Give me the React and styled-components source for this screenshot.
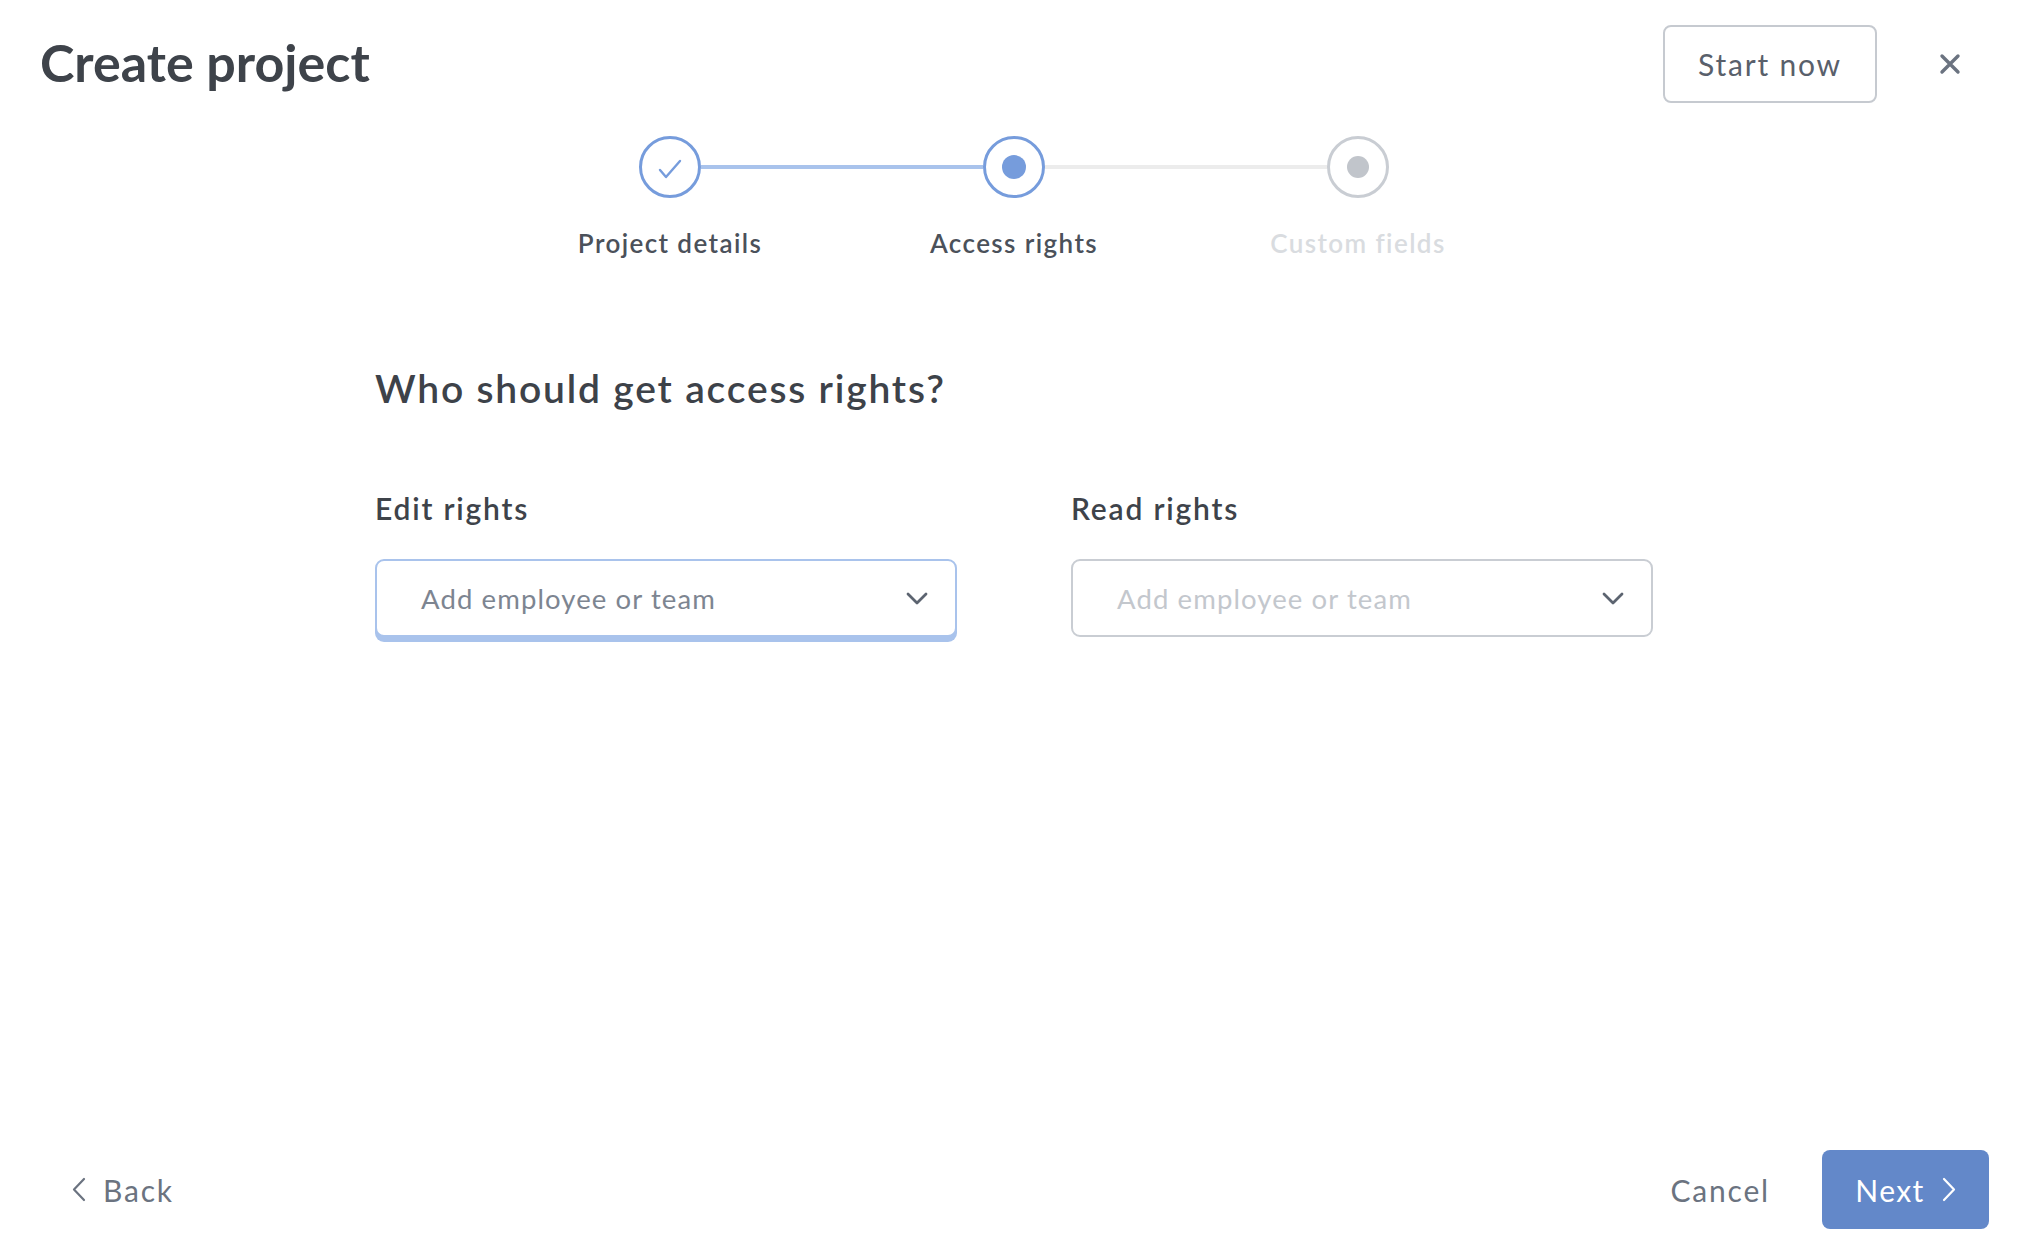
import React from 'react';
import styled, {createGlobalStyle} from 'styled-components';

const GlobalStyle = createGlobalStyle`
  html, body {
    margin: 0;
    padding: 0;
    background: #ffffff;
  }
  body {
    font-family: Lato, "Open Sans", sans-serif;
    -webkit-font-smoothing: antialiased;
  }
  * { box-sizing: border-box; }
`

const BLUE = '#769cdc'
const BLUE_LIGHT = '#a9c3ec'
const GREY_RING = '#c9cdd3'

const Page = styled.div`
  height: 100vh;
  display: flex;
  flex-direction: column;
  padding-top: 25px;
`

const Header = styled.header`
  display: flex;
  align-items: center;
  justify-content: space-between;
  padding: 0 60px 0 40px;
  height: 78px;
`

const Title = styled.h1`
  margin: -5px 0 0;
  font-size: 52px;
  font-weight: 700;
  color: #3e434a;
`

const HeaderActions = styled.div`
  display: flex;
  align-items: center;
  gap: 49px;
`

const OutlineButton = styled.button`
  height: 78px;
  width: 214px;
  border: 2px solid #c6cad0;
  border-radius: 8px;
  background: #fff;
  font-family: inherit;
  font-size: 30px;
  letter-spacing: 1.8px;
  color: #59606b;
  cursor: pointer;
`

const IconButton = styled.button`
  width: 48px;
  height: 48px;
  border: none;
  background: none;
  padding: 0;
  display: flex;
  align-items: center;
  justify-content: center;
  color: #6b7380;
  cursor: pointer;
`

const Main = styled.main`
  padding-right: 6px;
`

const Stepper = styled.div`
  display: flex;
  justify-content: center;
  align-items: flex-start;
  margin-top: 33px;
`

const Step = styled.div`
  width: 62px;
  display: flex;
  flex-direction: column;
  align-items: center;
`

const Circle = styled.div`
  width: 62px;
  height: 62px;
  border-radius: 50%;
  border: 3px solid ${p => p.$muted ? GREY_RING : BLUE};
  display: flex;
  align-items: center;
  justify-content: center;
  color: ${BLUE};
`

const Dot = styled.span`
  width: ${p => p.$muted ? 22 : 24}px;
  height: ${p => p.$muted ? 22 : 24}px;
  border-radius: 50%;
  background: ${p => p.$muted ? '#c1c5cb' : BLUE};
`

const StepLabel = styled.div`
  margin-top: 29px;
  white-space: nowrap;
  font-size: 26px;
  line-height: 32px;
  font-weight: 600;
  letter-spacing: 1.4px;
  color: ${p => p.$muted ? '#d9dce0' : '#4b515a'};
`

const Connector = styled.div`
  flex: 0 0 282px;
  height: 4px;
  margin-top: 29px;
  background: ${p => p.$done ? BLUE_LIGHT : '#ececec'};
`

const Content = styled.section`
  width: 1278px;
  margin: 105px auto 0;
`

const Heading = styled.h2`
  margin: 0;
  font-size: 39px;
  line-height: 48px;
  font-weight: 600;
  letter-spacing: 1.8px;
  color: #3d4249;
`

const Fields = styled.div`
  display: grid;
  grid-template-columns: 582px 582px;
  column-gap: 114px;
  margin-top: 78px;
`

const Field = styled.div`
  display: flex;
  flex-direction: column;
`

const FieldLabel = styled.label`
  font-size: 30px;
  line-height: 36px;
  font-weight: 600;
  letter-spacing: 1.8px;
  color: #3e434a;
`

const Select = styled.div`
  margin-top: 33px;
  height: 78px;
  border-radius: 9px;
  border: 2px solid ${p => p.$focused ? BLUE_LIGHT : GREY_RING};
  box-shadow: ${p => p.$focused ? `0 5px 0 0 ${BLUE_LIGHT}` : 'none'};
  display: flex;
  align-items: center;
  justify-content: space-between;
  padding: 0 27px 0 44px;
  background: #fff;
  cursor: pointer;
`

const Placeholder = styled.span`
  font-size: 27.5px;
  letter-spacing: 1.1px;
  color: ${p => p.$focused ? '#7d8591' : '#c3c7cd'};
`

const Footer = styled.footer`
  margin-top: auto;
  display: flex;
  align-items: center;
  justify-content: space-between;
  padding: 0 45px 29px 40px;
`

const TextButton = styled.button`
  border: none;
  background: none;
  font-family: inherit;
  font-size: 30px;
  letter-spacing: 1.8px;
  color: #6b7380;
  display: flex;
  align-items: center;
  gap: 17px;
  padding: 0 0 0 32px;
  cursor: pointer;
`

const CancelButton = styled(TextButton)`
  padding: 0;
`

const FooterActions = styled.div`
  display: flex;
  align-items: center;
  gap: 52px;
`

const PrimaryButton = styled.button`
  height: 79px;
  width: 167px;
  border: none;
  border-radius: 8px;
  background: #6388c9;
  color: #fff;
  font-family: inherit;
  font-size: 30px;
  letter-spacing: 1.4px;
  display: flex;
  align-items: center;
  justify-content: center;
  gap: 17px;
  cursor: pointer;
`

const Chevron = ({dir = 'down', color = 'currentColor'}) => {
    if (dir === 'down') {
        return (
            <svg width="22" height="13" viewBox="0 0 22 13" fill="none">
                <polyline points="2,2 11,11 20,2" stroke={color} strokeWidth="2.8" strokeLinecap="round" strokeLinejoin="round"/>
            </svg>
        )
    }
    const pts = dir === 'left' ? '12,2 2,12.5 12,23' : '2,2 12,12.5 2,23'
    return (
        <svg width="14" height="25" viewBox="0 0 14 25" fill="none">
            <polyline points={pts} stroke={color} strokeWidth="2.2" strokeLinecap="round" strokeLinejoin="round"/>
        </svg>
    )
}

const CloseIcon = () => (
    <svg width="22" height="22" viewBox="0 0 22 22" fill="none">
        <path d="M3 3 L19 19 M19 3 L3 19" stroke="currentColor" strokeWidth="3.4" strokeLinecap="round"/>
    </svg>
)

const CheckIcon = () => (
    <svg width="24" height="20" viewBox="0 0 24 20" fill="none" style={{marginTop: 3}}>
        <polyline points="2,11 8,18 22,2" stroke="currentColor" strokeWidth="2.4" strokeLinecap="round" strokeLinejoin="round"/>
    </svg>
)

const steps = [
    {label: 'Project details', state: 'done'},
    {label: 'Access rights', state: 'active'},
    {label: 'Custom fields', state: 'todo'},
]

const fields = [
    {label: 'Edit rights', focused: true},
    {label: 'Read rights', focused: false},
]

export default function App() {
    return (
        <Page>
            <GlobalStyle/>
            <Header>
                <Title>Create project</Title>
                <HeaderActions>
                    <OutlineButton>Start now</OutlineButton>
                    <IconButton aria-label="Close"><CloseIcon/></IconButton>
                </HeaderActions>
            </Header>
            <Main>
                <Stepper>
                    {steps.map((s, i) => (
                        <React.Fragment key={s.label}>
                            {i > 0 && <Connector $done={s.state !== 'todo'}/>}
                            <Step>
                                <Circle $muted={s.state === 'todo'}>
                                    {s.state === 'done' ? <CheckIcon/> : <Dot $muted={s.state === 'todo'}/>}
                                </Circle>
                                <StepLabel $muted={s.state === 'todo'}>{s.label}</StepLabel>
                            </Step>
                        </React.Fragment>
                    ))}
                </Stepper>
                <Content>
                    <Heading>Who should get access rights?</Heading>
                    <Fields>
                        {fields.map(f => (
                            <Field key={f.label}>
                                <FieldLabel>{f.label}</FieldLabel>
                                <Select $focused={f.focused}>
                                    <Placeholder $focused={f.focused}>Add employee or team</Placeholder>
                                    <Chevron dir="down" color="#5c6470"/>
                                </Select>
                            </Field>
                        ))}
                    </Fields>
                </Content>
            </Main>
            <Footer>
                <TextButton><Chevron dir="left"/>Back</TextButton>
                <FooterActions>
                    <CancelButton>Cancel</CancelButton>
                    <PrimaryButton>Next<Chevron dir="right"/></PrimaryButton>
                </FooterActions>
            </Footer>
        </Page>
    );
}
